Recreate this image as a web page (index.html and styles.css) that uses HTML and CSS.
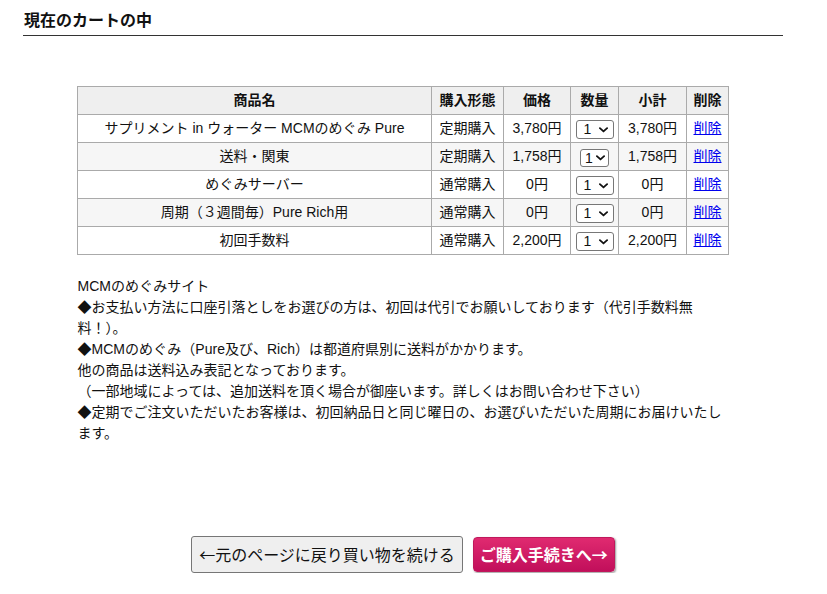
FILE: index.html
```html
<!DOCTYPE html>
<html lang="ja">
<head>
<meta charset="utf-8">
<title>現在のカートの中</title>
<link rel="stylesheet" href="styles.css">
</head>
<body>
<div class="page">
  <h1 class="title">現在のカートの中</h1>

  <table class="cart">
    <colgroup>
      <col class="c-name"><col class="c-type"><col class="c-price"><col class="c-qty"><col class="c-sub"><col class="c-del">
    </colgroup>
    <thead>
      <tr><th>商品名</th><th>購入形態</th><th>価格</th><th>数量</th><th>小計</th><th>削除</th></tr>
    </thead>
    <tbody>
      <tr>
        <td>サプリメント in ウォーター MCMのめぐみ Pure</td><td>定期購入</td><td>3,780円</td>
        <td><span class="sel"><select><option>1</option></select><svg class="chev" viewBox="0 0 10 6" width="9" height="6"><path d="M1 1l4 3.6L9 1" fill="none" stroke="#111" stroke-width="2" stroke-linecap="round" stroke-linejoin="round"/></svg></span></td>
        <td>3,780円</td><td><a href="#">削除</a></td>
      </tr>
      <tr class="alt">
        <td>送料・関東</td><td>定期購入</td><td>1,758円</td>
        <td><span class="sel small"><select><option>1</option></select><svg class="chev" viewBox="0 0 10 6" width="9" height="6"><path d="M1 1l4 3.6L9 1" fill="none" stroke="#111" stroke-width="2" stroke-linecap="round" stroke-linejoin="round"/></svg></span></td>
        <td>1,758円</td><td><a href="#">削除</a></td>
      </tr>
      <tr>
        <td>めぐみサーバー</td><td>通常購入</td><td>0円</td>
        <td><span class="sel"><select><option>1</option></select><svg class="chev" viewBox="0 0 10 6" width="9" height="6"><path d="M1 1l4 3.6L9 1" fill="none" stroke="#111" stroke-width="2" stroke-linecap="round" stroke-linejoin="round"/></svg></span></td>
        <td>0円</td><td><a href="#">削除</a></td>
      </tr>
      <tr class="alt">
        <td>周期（３週間毎）Pure Rich用</td><td>通常購入</td><td>0円</td>
        <td><span class="sel"><select><option>1</option></select><svg class="chev" viewBox="0 0 10 6" width="9" height="6"><path d="M1 1l4 3.6L9 1" fill="none" stroke="#111" stroke-width="2" stroke-linecap="round" stroke-linejoin="round"/></svg></span></td>
        <td>0円</td><td><a href="#">削除</a></td>
      </tr>
      <tr>
        <td>初回手数料</td><td>通常購入</td><td>2,200円</td>
        <td><span class="sel"><select><option>1</option></select><svg class="chev" viewBox="0 0 10 6" width="9" height="6"><path d="M1 1l4 3.6L9 1" fill="none" stroke="#111" stroke-width="2" stroke-linecap="round" stroke-linejoin="round"/></svg></span></td>
        <td>2,200円</td><td><a href="#">削除</a></td>
      </tr>
    </tbody>
  </table>

  <div class="notes">
    MCMのめぐみサイト<br>
    ◆お支払い方法に口座引落としをお選びの方は、初回は代引でお願いしております（代引手数料無料！）。<br>
    ◆MCMのめぐみ（Pure及び、Rich）は都道府県別に送料がかかります。<br>
    他の商品は送料込み表記となっております。<br>
    （一部地域によっては、追加送料を頂く場合が御座います。詳しくはお問い合わせ下さい）<br>
    ◆定期でご注文いただいたお客様は、初回納品日と同じ曜日の、お選びいただいた周期にお届けいたします。
  </div>

  <div class="actions">
    <button class="btn-back" type="button"><span class="arrow">←</span>元のページに戻り買い物を続ける</button>
    <button class="btn-next" type="button">ご購入手続きへ<span class="arrow">→</span></button>
  </div>
</div>
</body>
</html>
```

FILE: styles.css
```css
html, body {
  margin: 0;
  padding: 0;
  background: #fff;
}
body {
  font-family: "Liberation Sans", "Noto Sans CJK JP", sans-serif;
  color: #111;
  font-size: 14px;
}
.page {
  width: 760px;
  margin-left: 23px;
}
.title {
  margin: 0;
  padding: 10px 0 3px 1px;
  font-size: 16px;
  line-height: 22px;
  font-weight: bold;
  border-bottom: 1px solid #333;
}
.cart {
  margin: 50px auto 0;
  width: 651px;
  border-collapse: collapse;
  table-layout: fixed;
}
.c-name { width: 354px; }
.c-type { width: 72px; }
.c-price { width: 67px; }
.c-qty { width: 48px; }
.c-sub { width: 68px; }
.c-del { width: 42px; }
.cart th, .cart td {
  border: 1px solid #aaa;
  height: 25px;
  padding: 0 0 2px;
  text-align: center;
  line-height: 20px;
  white-space: nowrap;
  font-size: 14px;
}
.cart th {
  background: #efefef;
  font-weight: bold;
}
.cart tr.alt td {
  background: #f6f6f6;
}
.cart a {
  color: #0000ee;
  text-decoration: underline;
}
.sel {
  position: relative;
  display: inline-block;
  vertical-align: middle;
  top: 1px;
}
.sel select {
  appearance: none;
  -webkit-appearance: none;
  width: 38px;
  height: 19px;
  border: 1px solid #777;
  border-radius: 3px;
  background: #fff;
  font-family: inherit;
  font-size: 14px;
  line-height: 17px;
  padding: 0 0 0 7px;
  margin: 0;
  color: #111;
  display: block;
}
.sel.small select {
  width: 29px;
  height: 18px;
  padding-left: 4px;
}
.sel .chev {
  position: absolute;
  right: 6px;
  top: 7px;
  pointer-events: none;
}
.sel.small .chev {
  right: 4px;
  top: 6px;
}
.notes {
  width: 651px;
  margin: 21px auto 0;
  font-size: 14px;
  line-height: 21px;
}
.actions {
  margin-top: 92px;
  display: flex;
  justify-content: center;
  align-items: center;
  gap: 10px;
}
.arrow {
  font-family: "Noto Sans CJK JP", sans-serif;
}
.btn-back {
  height: 37px;
  padding: 0 7px;
  font-family: inherit;
  font-size: 16px;
  line-height: 20px;
  color: #111;
  background: #efefef;
  border: 1px solid #767676;
  border-radius: 3px;
}
.btn-next {
  height: 35px;
  padding: 0 6px;
  font-family: inherit;
  font-size: 16px;
  line-height: 20px;
  font-weight: bold;
  color: #fff;
  background: linear-gradient(#e02a70, #c10f5b);
  border: 1px solid #c0195c;
  border-radius: 4px;
  box-shadow: 1px 1px 2px #999;
}
```
